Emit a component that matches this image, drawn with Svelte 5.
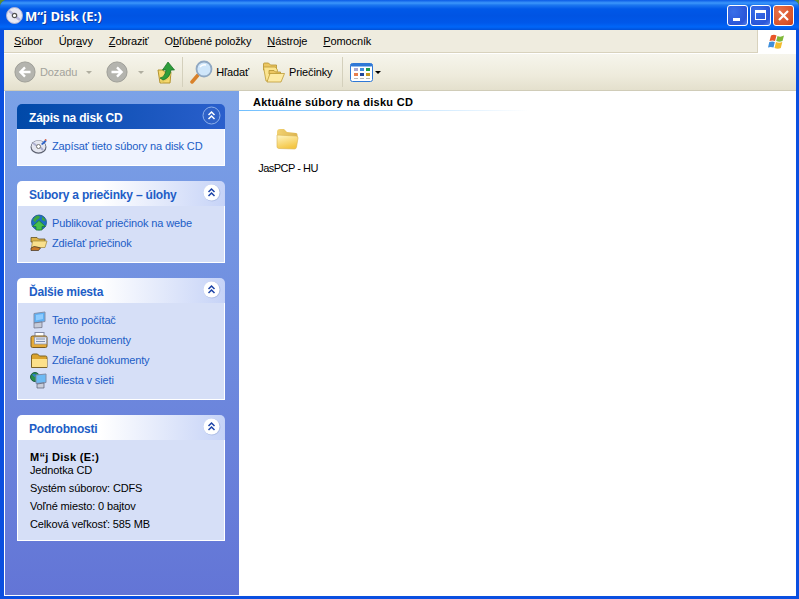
<script>
  const menu = [
    ['', 'S', 'úbor'], ['Úpr', 'a', 'vy'], ['', 'Z', 'obraziť'], ['O', 'b', 'ľúbené položky'], ['', 'N', 'ástroje'], ['', 'P', 'omocník']
  ];
  const tasks = [
    { title: 'Súbory a priečinky – úlohy', items: [['web', 'Publikovať priečinok na webe'], ['share', 'Zdieľať priečinok']] },
    { title: 'Ďalšie miesta', items: [['pc', 'Tento počítač'], ['docs', 'Moje dokumenty'], ['folder', 'Zdieľané dokumenty'], ['net', 'Miesta v sieti']] }
  ];
</script>

{#snippet chevrons(dark)}
  <svg class="chev" width="19" height="19" viewBox="0 0 19 19">
    {#if dark}
      <circle cx="9.500" cy="9.500" r="8.500" fill="#2f62c8" stroke="#8fb0ea" stroke-width="1"/>
      <path d="M6.500 9l3-3 3 3M6.500 13l3-3 3 3" fill="none" stroke="#fff" stroke-width="1.500"/>
    {:else}
      <circle cx="10" cy="10" r="8.500" fill="#9fb0dc" opacity=".6"/>
      <circle cx="9.500" cy="9.500" r="8" fill="#fff"/>
      <path d="M6.500 9l3-3 3 3M6.500 13l3-3 3 3" fill="none" stroke="#1c43a8" stroke-width="1.500"/>
    {/if}
  </svg>
{/snippet}

{#snippet smallIcon(k)}
  <svg class="ico" width="18" height="18" viewBox="0 0 18 18">
    {#if k === 'burn'}
      <ellipse cx="8.500" cy="10" rx="8" ry="6.800" fill="#5c6070"/>
      <ellipse cx="8.500" cy="9.500" rx="7" ry="6" fill="#e4e6f0"/>
      <path d="M3 6l4 3M13 13l-3-3" stroke="#aeb0d0" stroke-width="2"/>
      <circle cx="8.500" cy="9.500" r="2" fill="#fff" stroke="#777"/>
      <path d="M11 7l4-4 1.500 1.500-4 3.500z" fill="#2f63c8"/>
      <path d="M15 2.500l1.500 1" stroke="#d04a30" stroke-width="1.500"/>
    {:else if k === 'web'}
      <circle cx="9" cy="8.500" r="7.500" fill="#1f6fc2" stroke="#174f8a" stroke-width=".8"/>
      <path d="M3 6q2-4 5-4.500 3 1 1 3-3 1-4 4zM12 2.500q3 1.500 3.500 5L12 6z" fill="#3fa53c"/>
      <path d="M9 6.500l6.500 6h-3.500v3.500H6v-3.500H2.500z" fill="#49c04c" stroke="#1b7a2a" stroke-width=".7"/>
    {:else if k === 'share'}
      <path d="M1 3.500h6l1.500 1.500h6.500v3H1z" fill="#dcb248" stroke="#5f5225" stroke-width=".8"/>
      <path d="M2.500 7H17l-2 6.500H1.500z" fill="#f9e08c" stroke="#9c8436" stroke-width=".7"/>
      <path d="M1 14q3-2.500 6-1l3.500 1-2 2.500H1z" fill="#c87a2a" stroke="#3f3220" stroke-width=".7"/>
    {:else if k === 'pc'}
      <path d="M4 2.500l11-1.500v9.500L4 12z" fill="#5fb0f4" stroke="#8591ab"/>
      <path d="M6 4l7-1v5l-7 1.500z" fill="#8fccff"/>
      <path d="M4 12l8-1v5.500l-8 .500z" fill="#c5cad8" stroke="#676c80" stroke-width=".7"/>
    {:else if k === 'docs'}
      <rect x="5" y="1.500" width="9" height="6" fill="#fff" stroke="#828aa6"/>
      <rect x="1" y="5" width="16" height="11.500" rx="1.500" fill="#e4ab3a" stroke="#7a5a1f"/>
      <rect x="4.500" y="6" width="12" height="7" fill="#e7ebf5" stroke="#8a90a8" stroke-width=".7"/>
      <path d="M6 8h9M6 10.500h9" stroke="#7f8fb0"/>
    {:else if k === 'folder'}
      <path d="M1.500 5q0-2 2-2h4l2 2h6q1.500 0 1.500 1.500v10H1.500z" fill="#dba42e" stroke="#7d6327"/>
      <path d="M2 8h15v8H2z" fill="#fce08a"/>
    {:else if k === 'net'}
      <circle cx="5" cy="6" r="4.500" fill="#2a8f48" stroke="#1a5a4a"/>
      <path d="M2 3.500q2-1 4 0l-1 3z" fill="#2f7fd0"/>
      <path d="M6 4l10-1v8.500L6 12.500z" fill="#6dbaf4" stroke="#7f8ca8"/>
      <path d="M7 13l7-1v5H7z" fill="#c8cdda" stroke="#555b70" stroke-width=".7"/>
    {/if}
  </svg>
{/snippet}

<div class="win">
  <header class="title">
    <svg class="cd" width="17" height="17" viewBox="0 0 17 17">
      <circle cx="8.500" cy="8.500" r="8" fill="#e9e9f4" stroke="#aeb2d2"/>
      <path d="M3 4l4 3M14 13l-4-3" stroke="#b7b7de" stroke-width="2.500"/>
      <circle cx="8.500" cy="8.500" r="2.200" fill="#fff" stroke="#555" stroke-width="1.200"/>
    </svg>
    <span class="title-text">M“j Disk (E:)</span>
    <div class="caps">
      <button class="cap" aria-label="min"><i class="min"></i></button>
      <button class="cap" aria-label="max"><i class="max"></i></button>
      <button class="cap close" aria-label="close">
        <svg width="13" height="13" viewBox="0 0 13 13"><path d="M2 2l9 9M11 2l-9 9" stroke="#fff" stroke-width="2.200"/></svg>
      </button>
    </div>
  </header>

  <div class="client">
    <nav class="menubar">
      <div class="menus">
        {#each menu as m}
          <span class="menu">{m[0]}<u>{m[1]}</u>{m[2]}</span>
        {/each}
      </div>
      <div class="logo">
        <svg width="20" height="20" viewBox="0 0 20 20">
          <path d="M4 3.500q3-1.500 5.500 0L8 9Q5.500 8 2.500 9z" fill="#e8562a"/>
          <path d="M10.500 4q3 1.500 6.500-.500L15.500 9q-3 1.500-6.300 0z" fill="#7fb83a"/>
          <path d="M2.300 10q3-1 5.500 0L6.500 15.500q-3-1-5.500 0z" fill="#3f8fdc"/>
          <path d="M9 10q3 1.500 6.300 0l-1.500 6q-3 1.500-6.300 0z" fill="#f2bc2e"/>
        </svg>
      </div>
    </nav>

    <div class="toolbar">
      <div class="group">
        <span class="round"><svg width="22" height="22" viewBox="0 0 24 24"><circle cx="12" cy="12" r="11" fill="#b4b4ae" stroke="#9a9a94"/><path d="M18 12H8M12 7l-5 5 5 5" fill="none" stroke="#fff" stroke-width="2.600"/></svg></span>
        <span class="lbl dis">Dozadu</span>
        <span class="drop dis-drop"></span>
        <span class="round second"><svg width="22" height="22" viewBox="0 0 24 24"><circle cx="12" cy="12" r="11" fill="#b4b4ae" stroke="#9a9a94"/><path d="M6 12h10M12 7l5 5-5 5" fill="none" stroke="#fff" stroke-width="2.600"/></svg></span>
        <span class="drop dis-drop second-drop"></span>
        <svg class="up" width="19" height="23" viewBox="0 0 19 23">
          <path d="M1 9h5l1.500 2H14l-1 11H3z" fill="#f6d96f" stroke="#b3932f"/>
          <path d="M4 21q4-2 6-3 3-2 3-8" fill="none" stroke="#e8cd60" stroke-width="2"/>
          <path d="M3 17q5-1 6-8H5.500L11 1l6.500 8H14q-1 8-8 10z" fill="#2e9d3a" stroke="#176d24" stroke-width=".7"/>
        </svg>
      </div>
      <div class="group sep">
        <svg class="mag" width="24" height="24" viewBox="0 0 24 24">
          <path d="M9 15L3 22" stroke="#d9822b" stroke-width="3.500" stroke-linecap="round"/>
          <circle cx="15" cy="9" r="7.500" fill="#cfe6fa" stroke="#90a8c2" stroke-width="1.800"/>
          <path d="M11 7q2-3 6-2" fill="none" stroke="#fff" stroke-width="1.500"/>
        </svg>
        <span class="lbl">Hľadať</span>
        <svg class="fold" width="22" height="21" viewBox="0 0 22 21">
          <path d="M.500 2q0-1 1-1h4l2 2h6v5H.500z" fill="#ecc662" stroke="#b2912f" stroke-width=".8"/>
          <path d="M.500 5h12l2 3-2 11H3z" fill="#fbe48f" stroke="#bd9b35" stroke-width=".8"/>
          <path d="M6 8.500h5l1.500 1.500h5v2H6z" fill="#ecc662" stroke="#b2912f" stroke-width=".8"/>
          <path d="M7 11.500h14.500L18 20H4z" fill="#fdeaa3" stroke="#bd9b35" stroke-width=".8"/>
        </svg>
        <span class="lbl">Priečinky</span>
      </div>
      <div class="group sep views">
        <svg width="23" height="19" viewBox="0 0 23 19">
          <rect x="0.500" y="0.500" width="22" height="18" rx="2" fill="#fff" stroke="#2f78d6"/>
          <rect x="0.500" y="0.500" width="22" height="3" rx="1.500" fill="#2f78d6"/>
          <rect x="4" y="5" width="4" height="3" fill="#a8a8d0"/><rect x="10" y="5" width="4" height="3" fill="#3f8fe0"/><rect x="16" y="5" width="4" height="3" fill="#1f9a4a"/>
          <rect x="4" y="10" width="4" height="3" fill="#e8804f"/><rect x="10" y="10" width="4" height="3" fill="#20489c"/><rect x="16" y="10" width="4" height="3" fill="#c89a20"/>
          <rect x="4" y="15" width="4" height="1" fill="#b8b8b8"/><rect x="10" y="15" width="4" height="1" fill="#b8b8b8"/><rect x="16" y="15" width="4" height="1" fill="#b8b8b8"/>
        </svg>
        <span class="drop"></span>
      </div>
    </div>

    <div class="main">
      <aside class="side">
        <section class="panel">
          <h2 class="head primary"><span>Zápis na disk CD</span>{@render chevrons(true)}</h2>
          <div class="body light">
            <a class="task">{@render smallIcon('burn')}<span>Zapísať tieto súbory na disk CD</span></a>
          </div>
        </section>

        {#each tasks as p}
          <section class="panel">
            <h2 class="head"><span>{p.title}</span>{@render chevrons(false)}</h2>
            <div class="body">
              {#each p.items as it}
                <a class="task">{@render smallIcon(it[0])}<span>{it[1]}</span></a>
              {/each}
            </div>
          </section>
        {/each}

        <section class="panel">
          <h2 class="head"><span>Podrobnosti</span>{@render chevrons(false)}</h2>
          <div class="body info">
            <strong>M“j Disk (E:)</strong>
            <p class="type">Jednotka CD</p>
            <p>Systém súborov: CDFS</p>
            <p>Voľné miesto: 0 bajtov</p>
            <p>Celková veľkosť: 585 MB</p>
          </div>
        </section>
      </aside>

      <main class="files">
        <h3 class="group-title">Aktuálne súbory na disku CD</h3>
        <div class="rule"></div>
        <div class="file">
          <svg class="big" width="24" height="24" viewBox="0 0 24 24">
            <defs>
              <linearGradient id="fg" x1="0" y1="0" x2="0.400" y2="1"><stop offset="0" stop-color="#fff6c4"/><stop offset="1" stop-color="#f4c644"/></linearGradient>
              <linearGradient id="fb" x1="0" y1="0" x2="1" y2="0"><stop offset="0" stop-color="#f2d272"/><stop offset="1" stop-color="#dcb450"/></linearGradient>
            </defs>
            <path d="M2 5q0-3 3-3h4l3 3 9 1q1.500 0 1.500 2v3H2z" fill="url(#fb)"/>
            <path d="M2 8l19 1q2 0 2 2l-1.500 9q-.3 2-2 2L4 21.500q-2 0-2-2z" fill="url(#fg)" stroke="#d9b24f" stroke-width=".6"/>
          </svg>
          <span>JasPCP - HU</span>
        </div>
      </main>
    </div>
  </div>
</div>

<style>
  :global(body) { margin: 0; background: #5d8c2e; }
  .win {
    width: 799px; height: 599px; box-sizing: border-box;
    display: flex; flex-direction: column;
    border-radius: 7px 7px 0 0; overflow: hidden;
    font-family: "Liberation Sans", Arial, sans-serif; font-size: 11px; letter-spacing: -0.13px;
    background: #0a4fe0;
    padding-bottom: 3px;
  }
  .title {
    height: 30px; flex: none; display: flex; align-items: center; box-sizing: border-box;
    padding: 0 5px 0 6px;
    background: linear-gradient(#0a5ae6 0, #3c97fb 3px, #1c77f0 5px, #0058e8 9px, #0054e3 16px, #0058ea 23px, #0066f8 27px, #0050d8 30px);
  }
  .cd { margin-right: 2px; }
  .title-text { color: #fff; font-family: "Open Sans", sans-serif; font-weight: 700; font-size: 13px; letter-spacing: 0; padding-top: 1px; text-shadow: 1px 1px 0 #0f3a9c; }
  .caps { margin-left: auto; display: flex; gap: 2px; }
  .cap {
    width: 21px; height: 21px; padding: 0; box-sizing: border-box; position: relative;
    border: 1px solid #fff; border-radius: 3px; display: flex; align-items: center; justify-content: center;
    background: radial-gradient(circle at 30% 30%, #3a6fe8, #2a55d8 70%, #5580ea);
  }
  .cap.close { background: radial-gradient(circle at 30% 30%, #e8714a, #d8542a 70%, #c83a18); }
  .min { width: 7px; height: 3px; background: #fff; position: absolute; left: 5px; bottom: 4px; }
  .max { width: 11px; height: 10px; box-sizing: border-box; border: 1px solid #fff; border-top-width: 3px; }
  .client { flex: 1; min-height: 0; display: flex; flex-direction: column; margin: 0 3px 0 4px; background: #fff; }
  .menubar { height: 23px; flex: none; display: flex; box-sizing: border-box; background: #efecdf; border-bottom: 1px solid #d8d2bd; }
  .menus { flex: 1; display: flex; align-items: center; padding-left: 2px; gap: 0; }
  .menu { padding: 0 8px; color: #000; }
  .logo { width: 38px; margin-bottom: -1px; background: #fff; border-left: 1px solid #d8d2bd; display: flex; align-items: center; justify-content: center; }
  .toolbar {
    height: 38px; flex: none; display: flex; align-items: center; box-sizing: border-box;
    background: linear-gradient(#f6f5ec, #eeebdc 60%, #e4e0cd);
    border-bottom: 1px solid #d0ccb8; border-top: 1px solid #fff;
    padding-left: 10px;
  }
  .group { display: flex; align-items: center; height: 30px; }
  .sep { border-left: 1px solid #d4d0bc; }
  .lbl { color: #000; }
  .dis { color: #a3a39c; margin-left: 4px; }
  .round { display: flex; }
  .drop { width: 0; height: 0; border: 3px solid transparent; border-top: 3px solid #000; border-bottom: 0; margin-left: 9px; }
  .dis-drop { border-top-color: #b0aea0; }
  .second { margin-left: 14px; }
  .second-drop { margin-left: 10px; }
  .up { margin-left: 13px; margin-right: 6px; }
  .mag { margin: 0 3px 0 6px; }
  .fold { margin: 0 4px 0 14px; }
  .views { margin-left: 10px; padding: 0 4px 0 7px; }
  .views .drop { margin-left: 2px; }
  .main { flex: 1; min-height: 0; display: flex; border-left: 1px solid #fff; border-bottom: 1px solid #fff; }
  .side {
    width: 234px; flex: none; box-sizing: border-box; padding: 13px 14px 0 12px;
    background: linear-gradient(#7ba2e7, #6375d6);
    display: flex; flex-direction: column; gap: 15px;
  }
  .panel { width: 208px; }
  .head {
    height: 25px; margin: 0; box-sizing: border-box; padding: 0 4px 0 12px; display: flex; align-items: center; justify-content: space-between;
    border-radius: 5px 5px 0 0;
    font-size: 12px; font-weight: 700; color: #215dc6; letter-spacing: -0.2px;
    background: linear-gradient(90deg, #fff 0, #fff 40%, #c6d3f7);
  }
  .head span { padding-top: 2px; }
  .head.primary { color: #fff; background: linear-gradient(90deg, #0049a8, #2a5fcc); }
  .chev { margin-top: -2px; }
  .body {
    box-sizing: border-box; padding: 8px 12px 10px; background: #d6dff7;
    border: 1px solid #fff; border-top: 0; display: flex; flex-direction: column; gap: 2px;
  }
  .body.light { background: #eff3ff; }
  .task { display: flex; align-items: center; height: 18px; color: #215dc6; gap: 4px; }
  .ico { flex: none; }
  .info { color: #000; padding: 11px 12px 9px; gap: 0; line-height: 13px; }
  .info strong { font-weight: 700; letter-spacing: .3px; }
  .info p { margin: 5px 0 0; }
  .info p.type { margin: 0; }
  .files { flex: 1; }
  .group-title { margin: 5px 0 0 14px; font-size: 11px; font-weight: 700; color: #000; height: 14px; line-height: 13px; letter-spacing: 0.27px; }
  .rule { height: 1px; width: 290px; background: linear-gradient(90deg, #70bfff, #fff); }
  .file { margin: 16px 0 0 16px; width: 66px; display: flex; flex-direction: column; align-items: center; gap: 11px; color: #000; }
  .big { margin-right: 3px; }
  .file span { white-space: nowrap; letter-spacing: -0.5px; }
</style>
